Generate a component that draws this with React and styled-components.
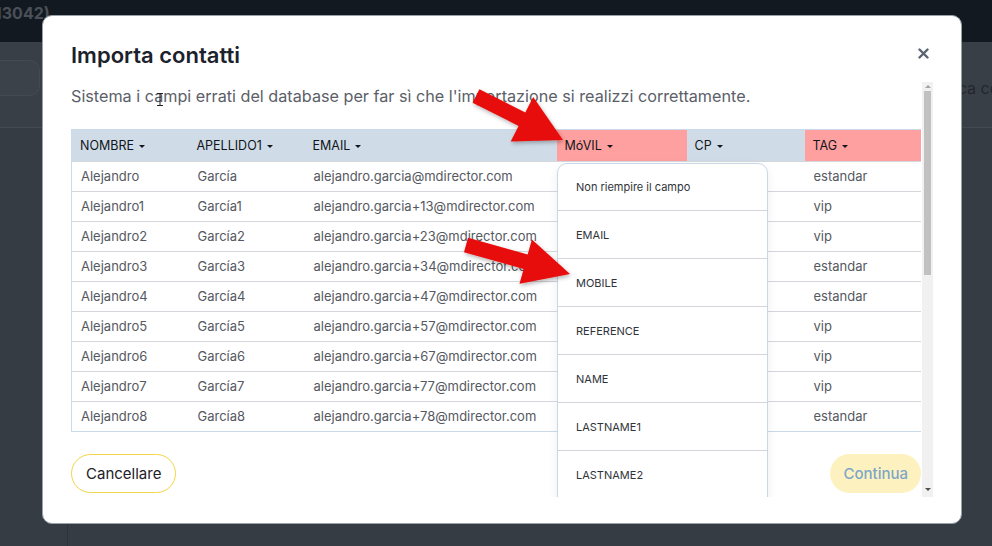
import React from 'react';
import styled, { createGlobalStyle } from 'styled-components';

const GlobalStyle = createGlobalStyle`
  html, body {
    margin: 0;
    padding: 0;
  }
  body {
    background: #363c44;
    font-family: Inter, "Noto Sans", "Liberation Sans", sans-serif;
    overflow: hidden;
  }
  * {
    box-sizing: border-box;
  }
`;

const Page = styled.div`
  position: relative;
  width: 992px;
  height: 546px;
  overflow: hidden;
  background: #363c44;
  display: flex;
  flex-direction: column;
`;

const TopBar = styled.div`
  height: 42px;
  background: #131920;
  display: flex;
  align-items: flex-start;
  padding-top: 3px;
`;

const TopTitle = styled.span`
  margin-left: -31px;
  font-size: 16px;
  font-weight: 700;
  color: #4a5058;
`;

const Toolbar = styled.div`
  height: 86px;
  background: #393f47;
  border-bottom: 1px solid #444a52;
  display: flex;
  align-items: center;
  justify-content: space-between;
`;

const SearchBox = styled.div`
  width: 40px;
  height: 36px;
  margin-top: -14px;
  border: 1px solid #444a52;
  border-left: none;
  border-radius: 0 10px 10px 0;
  background: #3c424a;
`;

const ToolbarText = styled.span`
  font-size: 16px;
  color: #22272d;
  margin-right: -45px;
  margin-top: 6px;
  white-space: nowrap;
`;

const Body = styled.div`
  flex: 1;
  display: flex;
`;

const Sidebar = styled.div`
  width: 68px;
  border-right: 1px solid #2e333a;
`;

const Modal = styled.div`
  position: absolute;
  left: 42px;
  top: 15px;
  width: 920px;
  height: 509px;
  background: #fff;
  border: 1px solid #9aa0a7;
  border-radius: 10px;
  padding: 25px 28px 0 28px;
  display: flex;
  flex-direction: column;
`;

const Header = styled.div`
  height: 28px;
  display: flex;
  align-items: center;
  justify-content: space-between;
  margin-bottom: 13px;
`;

const Title = styled.h2`
  margin: 0;
  font-size: 22px;
  line-height: 28px;
  font-weight: 600;
  color: #1b222c;
`;

const CloseButton = styled.button`
  border: none;
  background: none;
  padding: 0;
  margin: -4px 4px 0 0;
  width: 11px;
  height: 11px;
  display: flex;
  cursor: pointer;
`;

const ScrollArea = styled.div`
  height: 415px;
  display: flex;
  gap: 1px;
`;

const Content = styled.div`
  position: relative;
  width: 850px;
  flex-shrink: 0;
  overflow: hidden;
  display: flex;
  flex-direction: column;
`;

const Subtitle = styled.p`
  margin: 4px 0 0 0;
  font-size: 16.2px;
  line-height: 20px;
  color: #5b6068;
  white-space: nowrap;
`;

const Table = styled.table`
  margin-top: 23px;
  width: 850px;
  table-layout: fixed;
  border-collapse: collapse;
  border: 1px solid #cbdae8;
  font-size: 13px;
`;

const HeadCell = styled.th`
  height: 32px;
  padding: 0 8px;
  text-align: left;
  font-weight: 400;
  font-size: 12.5px;
  color: #121519;
  background: ${(p) => (p.$error ? '#ffa0a0' : '#cfdce8')};
  white-space: nowrap;
`;

const Caret = styled.span`
  display: inline-block;
  margin-left: 5px;
  vertical-align: middle;
  width: 0;
  height: 0;
  border-left: 3.5px solid transparent;
  border-right: 3.5px solid transparent;
  border-top: 3.5px solid #121519;
`;

const Row = styled.tr`
  border-top: 1px solid #d4d7dc;
`;

const Cell = styled.td`
  height: 30px;
  padding: 0 9px 1px 9px;
  color: #55595f;
  white-space: nowrap;
  overflow: hidden;
`;

const Footer = styled.div`
  margin-top: 22px;
  display: flex;
  justify-content: space-between;
  align-items: center;
`;

const Button = styled.button`
  height: 39px;
  padding: 0 ${(p) => (p.$primary ? '13px' : '14px')};
  border-radius: 20px;
  font-family: Inter, "Noto Sans", "Liberation Sans", sans-serif;
  font-size: 15px;
  font-weight: ${(p) => (p.$primary ? 500 : 400)};
  border: ${(p) => (p.$primary ? 'none' : '1px solid #f3d54a')};
  background: ${(p) => (p.$primary ? '#fdf2bf' : '#fff')};
  color: ${(p) => (p.$primary ? '#7ea6c8' : '#1d2128')};
  cursor: pointer;
`;

const Dropdown = styled.ul`
  position: absolute;
  left: 486px;
  top: 81px;
  width: 211px;
  margin: 0;
  padding: 0;
  list-style: none;
  background: #fff;
  border: 1px solid #c8d8e8;
  border-radius: 10px 10px 0 0;
  box-shadow: 0 3px 10px rgba(40, 50, 60, 0.08);
`;

const Option = styled.li`
  height: ${(p) => (p.$first ? '47px' : '48px')};
  display: flex;
  align-items: center;
  padding-left: 18px;
  font-size: 11px;
  color: #30343a;
  border-bottom: 1px solid #d2d6db;
`;

const Scrollbar = styled.div`
  width: 11px;
  background: #f1f1f1;
  display: flex;
  flex-direction: column;
  align-items: center;
  justify-content: space-between;
  padding: 3px 0 6px 0;
`;

const ScrollArrow = styled.span`
  width: 0;
  height: 0;
  border-left: 3px solid transparent;
  border-right: 3px solid transparent;
  ${(p) => (p.$down ? 'border-top: 3px solid #505050;' : 'border-bottom: 3px solid #a3a3a3;')}
`;

const Thumb = styled.div`
  width: 7px;
  height: 184px;
  margin-top: 3px;
  background: #c1c1c1;
`;

const ScrollSpacer = styled.div`
  flex: 1;
`;

const Overlay = styled.svg`
  position: absolute;
  left: 0;
  top: 0;
  width: 992px;
  height: 546px;
  pointer-events: none;
`;

const columns = [
  { name: 'NOMBRE', width: 117 },
  { name: 'APELLIDO1', width: 116 },
  { name: 'EMAIL', width: 252 },
  { name: 'MóVIL', width: 130, error: true },
  { name: 'CP', width: 118 },
  { name: 'TAG', width: 117, error: true },
];

const rows = [
  ['Alejandro', 'García', 'alejandro.garcia@mdirector.com', 'estandar'],
  ['Alejandro1', 'García1', 'alejandro.garcia+13@mdirector.com', 'vip'],
  ['Alejandro2', 'García2', 'alejandro.garcia+23@mdirector.com', 'vip'],
  ['Alejandro3', 'García3', 'alejandro.garcia+34@mdirector.com', 'estandar'],
  ['Alejandro4', 'García4', 'alejandro.garcia+47@mdirector.com', 'estandar'],
  ['Alejandro5', 'García5', 'alejandro.garcia+57@mdirector.com', 'vip'],
  ['Alejandro6', 'García6', 'alejandro.garcia+67@mdirector.com', 'vip'],
  ['Alejandro7', 'García7', 'alejandro.garcia+77@mdirector.com', 'vip'],
  ['Alejandro8', 'García8', 'alejandro.garcia+78@mdirector.com', 'estandar'],
];

const options = [
  'Non riempire il campo',
  'EMAIL',
  'MOBILE',
  'REFERENCE',
  'NAME',
  'LASTNAME1',
  'LASTNAME2',
  'PHONE',
];

// builds an arrow polygon from tail to tip
function arrowPoints(tail, tip, shaft = 14, head = 46, headLen = 45) {
  const dx = tip[0] - tail[0];
  const dy = tip[1] - tail[1];
  const len = Math.hypot(dx, dy);
  const ux = dx / len;
  const uy = dy / len;
  const px = -uy;
  const py = ux;
  const bx = tip[0] - ux * headLen;
  const by = tip[1] - uy * headLen;
  const pts = [
    [tail[0] + px * shaft / 2, tail[1] + py * shaft / 2],
    [bx + px * shaft / 2, by + py * shaft / 2],
    [bx + px * head / 2, by + py * head / 2],
    tip,
    [bx - px * head / 2, by - py * head / 2],
    [bx - px * shaft / 2, by - py * shaft / 2],
    [tail[0] - px * shaft / 2, tail[1] - py * shaft / 2],
  ];
  return pts.map((p) => p.map((v) => v.toFixed(1)).join(',')).join(' ');
}

const App = () => {
  return (
    <Page>
      <GlobalStyle />
      <TopBar>
        <TopTitle>(ID 13042)</TopTitle>
      </TopBar>
      <Toolbar>
        <SearchBox />
        <ToolbarText>Cerca contatti</ToolbarText>
      </Toolbar>
      <Body>
        <Sidebar />
      </Body>

      <Modal>
        <Header>
          <Title>Importa contatti</Title>
          <CloseButton aria-label="Chiudi">
            <svg width="11" height="11" viewBox="0 0 11 11">
              <path d="M1.5 1.5 L9.5 9.5 M9.5 1.5 L1.5 9.5" stroke="#5b6472" strokeWidth="2.4" strokeLinecap="round" />
            </svg>
          </CloseButton>
        </Header>
        <ScrollArea>
          <Content>
            <Subtitle>
              Sistema i campi errati del database per far sì che l'importazione si realizzi correttamente.
            </Subtitle>
            <Table>
              <colgroup>
                {columns.map((c) => (
                  <col key={c.name} style={{ width: c.width }} />
                ))}
              </colgroup>
              <thead>
                <tr>
                  {columns.map((c) => (
                    <HeadCell key={c.name} $error={c.error}>
                      {c.name}
                      <Caret />
                    </HeadCell>
                  ))}
                </tr>
              </thead>
              <tbody>
                {rows.map((r) => (
                  <Row key={r[0]}>
                    <Cell>{r[0]}</Cell>
                    <Cell>{r[1]}</Cell>
                    <Cell>{r[2]}</Cell>
                    <Cell />
                    <Cell />
                    <Cell>{r[3]}</Cell>
                  </Row>
                ))}
              </tbody>
            </Table>
            <Footer>
              <Button>Cancellare</Button>
              <Button $primary>Continua</Button>
            </Footer>
            <Dropdown>
              {options.map((o, i) => (
                <Option key={o} $first={i === 0}>
                  {o}
                </Option>
              ))}
            </Dropdown>
          </Content>
          <Scrollbar>
            <ScrollArrow />
            <Thumb />
            <ScrollSpacer />
            <ScrollArrow $down />
          </Scrollbar>
        </ScrollArea>
      </Modal>

      <Overlay viewBox="0 0 992 546">
        <defs>
          <filter id="arrowShadow" x="-20%" y="-20%" width="140%" height="140%">
            <feDropShadow dx="1" dy="2" stdDeviation="2" floodColor="#000" floodOpacity="0.3" />
          </filter>
        </defs>
        <polygon points={arrowPoints([476, 96], [563, 140], 15, 50, 46)} fill="#e80909" filter="url(#arrowShadow)" />
        <polygon points={arrowPoints([466, 245], [570, 274], 15, 46, 46)} fill="#e80909" filter="url(#arrowShadow)" />
        <path d="M157 93.5 H163 M160 93.5 V105.5 M157 105.5 H163" stroke="#222" strokeWidth="1" fill="none" />
      </Overlay>
    </Page>
  );
};

export default App;
